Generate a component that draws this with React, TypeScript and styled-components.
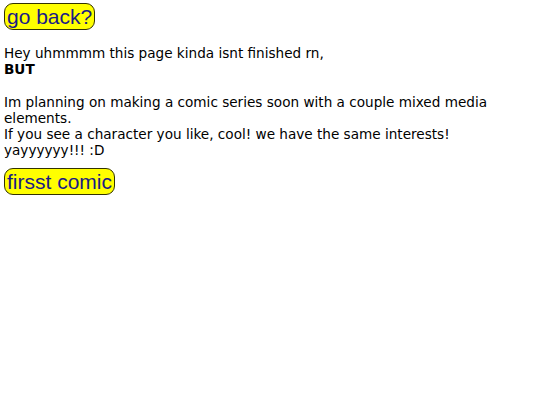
import styled, { createGlobalStyle } from "styled-components";

const GlobalStyle = createGlobalStyle`
    body {
        margin: 0;
        background: #ffffff;
        font-family: "DejaVu Sans", Verdana, sans-serif;
        font-size: 13.6px;
        color: #000000;
    }
`;

const Page = styled.div`
    padding: 3px 4px;
`;

const Button = styled.button`
    display: inline-block;
    background-color: yellow;
    color: #1a1a85;
    font-family: "Liberation Sans", Arial, sans-serif;
    font-size: 21px;
    line-height: 25px;
    padding: 0 2px;
    border: 1px solid #333300;
    border-radius: 9px;
    cursor: pointer;
`;

const Text = styled.p`
    margin: 15px 0 10px;
    line-height: 16.2px;
`;

export default function App() {
    return (
        <>
            <GlobalStyle />
            <Page>
                <Button>go back?</Button>
                <Text>
                    Hey uhmmmm this page kinda isnt finished rn,
                    <br />
                    <b>BUT</b>
                    <br />
                    <br />
                    Im planning on making a comic series soon with a couple mixed media elements.
                    <br />
                    If you see a character you like, cool! we have the same interests!
                    <br />
                    yayyyyyy!!! :D
                </Text>
                <Button>firsst comic</Button>
            </Page>
        </>
    );
}
